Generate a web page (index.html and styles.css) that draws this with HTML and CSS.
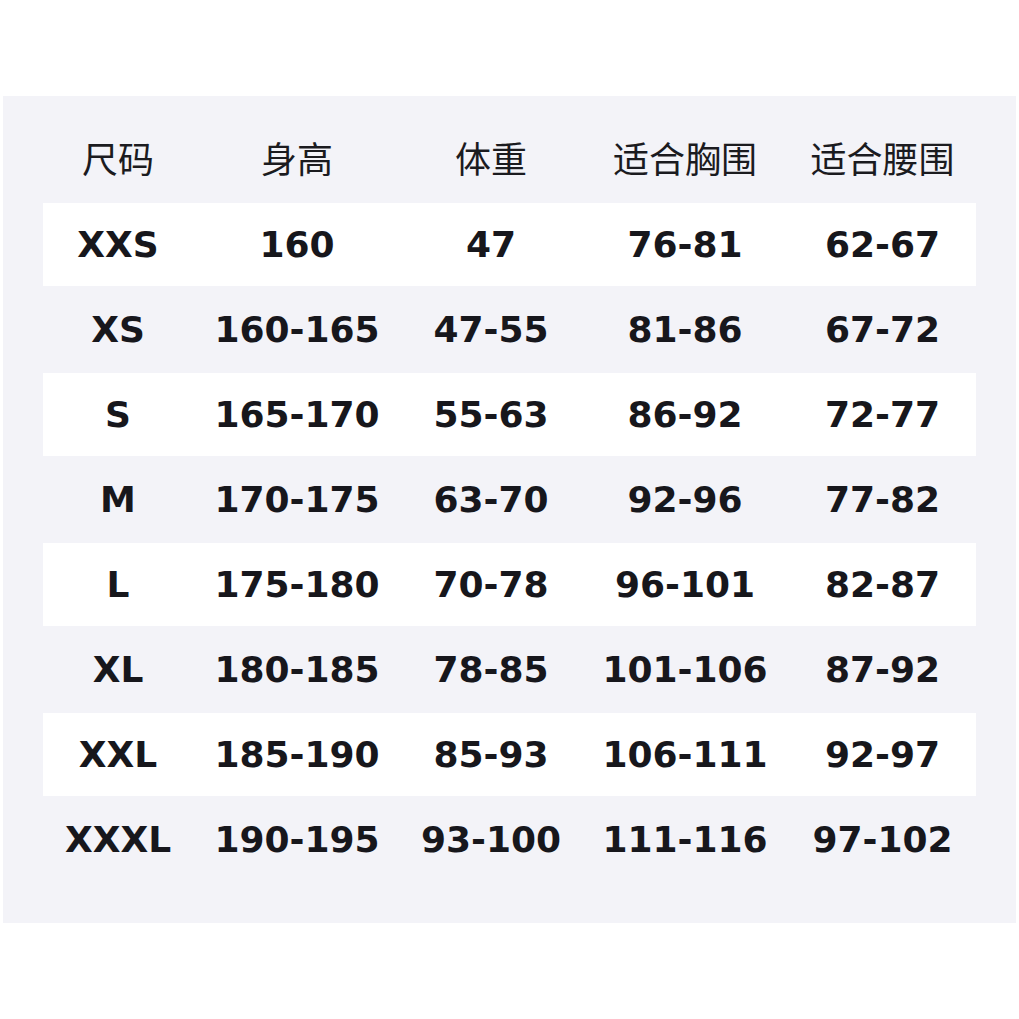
FILE: index.html
```html
<!DOCTYPE html>
<html lang="zh">
<head>
<meta charset="utf-8">
<title>尺码表</title>
<link rel="stylesheet" href="styles.css">
</head>
<body>
<div class="panel">
  <div class="row head">
    <div>尺码</div><div>身高</div><div>体重</div><div>适合胸围</div><div>适合腰围</div>
  </div>
  <div class="row light"><div>XXS</div><div>160</div><div>47</div><div>76-81</div><div>62-67</div></div>
  <div class="row dark"><div>XS</div><div>160-165</div><div>47-55</div><div>81-86</div><div>67-72</div></div>
  <div class="row light"><div>S</div><div>165-170</div><div>55-63</div><div>86-92</div><div>72-77</div></div>
  <div class="row dark"><div>M</div><div>170-175</div><div>63-70</div><div>92-96</div><div>77-82</div></div>
  <div class="row light"><div>L</div><div>175-180</div><div>70-78</div><div>96-101</div><div>82-87</div></div>
  <div class="row dark"><div>XL</div><div>180-185</div><div>78-85</div><div>101-106</div><div>87-92</div></div>
  <div class="row light"><div>XXL</div><div>185-190</div><div>85-93</div><div>106-111</div><div>92-97</div></div>
  <div class="row dark"><div>XXXL</div><div>190-195</div><div>93-100</div><div>111-116</div><div>97-102</div></div>
</div>
</body>
</html>
```
FILE: styles.css
```css
html, body {
  margin: 0;
  padding: 0;
  background: #ffffff;
}
body {
  width: 1019px;
  height: 1019px;
  overflow: hidden;
}
.panel {
  margin: 96px 0 0 3px;
  width: 1013px;
  height: 827px;
  box-sizing: border-box;
  padding: 21px 40px 40px 40px;
  background: #f3f3f8;
  color: #17171c;
}
.row {
  display: grid;
  grid-template-columns: 150px 208px 180px 208px 187px;
  align-items: center;
  text-align: center;
  font-family: "DejaVu Sans", "Noto Sans CJK SC", sans-serif;
  font-weight: bold;
  font-size: 36px;
  line-height: 1;
  white-space: nowrap;
}
.row.head {
  height: 86px;
  font-family: "Noto Sans CJK SC", sans-serif;
  font-weight: normal;
  font-size: 36px;
  color: #1b1b1f;
}
.row.head div {
  transform: translateY(-3px);
}
.row.light {
  height: 83px;
  background: #ffffff;
}
.row.dark {
  height: 87px;
}
```
